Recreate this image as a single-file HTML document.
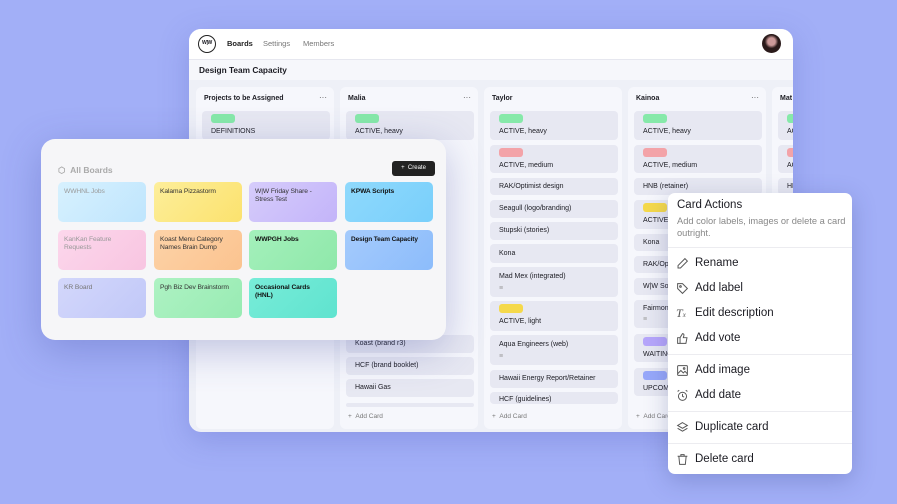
<!DOCTYPE html>
<html><head><meta charset="utf-8"><style>
*{box-sizing:border-box;margin:0;padding:0}
body{width:897px;height:504px;overflow:hidden;background:#a2aff7;font-family:"Liberation Sans",sans-serif;position:relative;color:#1b1b22}
.win{position:absolute;left:189px;top:29px;width:604px;height:403px;background:#eef0f7;border-radius:12px;overflow:hidden;box-shadow:0 8px 30px rgba(70,80,180,.25)}
.hdr{height:31px;background:#fff;border-bottom:1px solid #e6e7ef;position:relative}
.logo{position:absolute;left:9px;top:6px;width:18px;height:18px;border:1.5px solid #222;border-radius:50%;font-size:5px;font-weight:bold;text-align:center;line-height:15px;letter-spacing:-.3px}
.nav{position:absolute;top:10px;font-size:7.5px;color:#777}
.av{position:absolute;right:12px;top:5px;width:19px;height:19px;border-radius:50%;background:radial-gradient(circle at 50% 40%,#c99 0 25%,#2a1a1a 45%)}
.ttl{height:20px;background:#f6f7fb;font-size:8.3px;font-weight:bold;padding:5px 10px}
.col{position:absolute;top:58px;width:138px;height:342px;background:#f6f7fc;border-radius:6px}
.ch{position:absolute;left:8px;top:8px;font-size:7px;font-weight:bold}
.dots{position:absolute;right:7px;top:6px;font-size:8px;color:#555}
.cd{position:absolute;left:6px;width:128px;background:#e7e8f2;border-radius:4px;font-size:7px;padding:0 9px}
.lb{display:block;width:24px;height:9px;border-radius:3px;margin:3px 0 5px}
.add{position:absolute;left:8px;top:326px;font-size:6.5px;color:#777}
.g{background:#86e9a9}.r{background:#f3a3a8}.y{background:#f5d94b}.p{background:#b6a6fb}.b{background:#97a8fa}
.ov{position:absolute;left:41px;top:139px;width:405px;height:201px;background:#f6f6f8;border-radius:14px;box-shadow:0 10px 40px rgba(60,70,160,.3)}
.tile{position:absolute;width:88px;height:40px;border-radius:5px;font-size:6.7px;padding:6px 6px;line-height:7.5px;color:#333;letter-spacing:-.1px}
.menu{position:absolute;left:668px;top:193px;width:184px;height:281px;background:#fff;border-radius:7px;box-shadow:0 6px 24px rgba(40,50,120,.25)}
.mi{position:absolute;left:27px;font-size:11.5px;color:#1b1b22}
.ic{position:absolute;left:8px;width:13px;height:13px}
.dv{position:absolute;left:0;width:184px;height:1px;background:#ececf0}
</style></head><body>
<div class="win">
 <div class="hdr"><div class="logo">W|W</div>
 <div class="nav" style="left:38px;color:#222;font-weight:bold">Boards</div>
 <div class="nav" style="left:74px">Settings</div>
 <div class="nav" style="left:114px">Members</div>
 <div class="av"></div></div>
 <div class="ttl">Design Team Capacity</div>
 <div class="col" style="left:7px"><div class="ch">Projects to be Assigned</div><div class="dots">···</div>
  <div class="cd" style="top:24px;height:29px"><span class="lb g"></span>DEFINITIONS</div></div>
 <div class="col" style="left:151px"><div class="ch">Malia</div><div class="dots">···</div>
  <div class="cd" style="top:24px;height:29px"><span class="lb g"></span>ACTIVE, heavy</div>
  <div class="cd" style="top:248px;height:18px;line-height:18px">Koast (brand r3)</div>
  <div class="cd" style="top:270px;height:18px;line-height:18px">HCF (brand booklet)</div>
  <div class="cd" style="top:292px;height:18px;line-height:18px">Hawaii Gas</div>
  <div class="cd" style="top:316px;height:4px"></div>
  <div class="add">+ &nbsp;Add Card</div></div>
 <div class="col" style="left:295px"><div class="ch">Taylor</div>
  <div class="cd" style="top:24px;height:29px"><span class="lb g"></span>ACTIVE, heavy</div>
  <div class="cd" style="top:58px;height:28px"><span class="lb r"></span>ACTIVE, medium</div>
  <div class="cd" style="top:91px;height:17px;line-height:17px">RAK/Optimist design</div>
  <div class="cd" style="top:113px;height:18px;line-height:18px">Seagull (logo/branding)</div>
  <div class="cd" style="top:135px;height:18px;line-height:18px">Stupski (stories)</div>
  <div class="cd" style="top:157px;height:19px;line-height:19px">Kona</div>
  <div class="cd" style="top:180px;height:30px;padding-top:6px">Mad Mex (integrated)<div style="margin-top:5px;color:#999">≡</div></div>
  <div class="cd" style="top:214px;height:30px"><span class="lb y"></span>ACTIVE, light</div>
  <div class="cd" style="top:248px;height:30px;padding-top:6px">Aqua Engineers (web)<div style="margin-top:5px;color:#999">≡</div></div>
  <div class="cd" style="top:283px;height:18px;line-height:18px">Hawaii Energy Report/Retainer</div>
  <div class="cd" style="top:305px;height:12px;padding-top:4px">HCF (guidelines)</div>
  <div class="add">+ &nbsp;Add Card</div></div>
 <div class="col" style="left:439px"><div class="ch">Kainoa</div><div class="dots">···</div>
  <div class="cd" style="top:24px;height:29px"><span class="lb g"></span>ACTIVE, heavy</div>
  <div class="cd" style="top:58px;height:28px"><span class="lb r"></span>ACTIVE, medium</div>
  <div class="cd" style="top:91px;height:17px;line-height:17px">HNB (retainer)</div>
  <div class="cd" style="top:113px;height:29px"><span class="lb y"></span>ACTIVE, light</div>
  <div class="cd" style="top:147px;height:17px;line-height:17px">Kona</div>
  <div class="cd" style="top:169px;height:17px;line-height:17px">RAK/Optimist</div>
  <div class="cd" style="top:191px;height:17px;line-height:17px">W|W Social</div>
  <div class="cd" style="top:213px;height:28px;padding-top:5px">Fairmont<div style="margin-top:4px;color:#999">≡</div></div>
  <div class="cd" style="top:247px;height:28px"><span class="lb p"></span>WAITING</div>
  <div class="cd" style="top:281px;height:28px"><span class="lb b"></span>UPCOMING</div>
  <div class="add">+ &nbsp;Add Card</div></div>
 <div class="col" style="left:583px"><div class="ch">Mat</div>
  <div class="cd" style="top:24px;height:29px"><span class="lb g"></span>ACTIVE</div>
  <div class="cd" style="top:58px;height:28px"><span class="lb r"></span>ACTIVE</div>
  <div class="cd" style="top:91px;height:17px;line-height:17px">HNB</div></div>
</div>

<div class="ov">
 <div style="position:absolute;left:17px;top:26px;font-size:8.5px;font-weight:bold;color:#aaa">⬡ &nbsp;All Boards</div>
 <div style="position:absolute;left:351px;top:22px;width:43px;height:15px;background:#222;border-radius:3px;color:#fff;font-size:6px;text-align:center;line-height:15px">+ &nbsp;Create</div>
 <div class="tile" style="left:17px;top:43px;background:linear-gradient(135deg,#d7f1fe,#bfe5fd);color:#999">WWHNL Jobs</div>
 <div class="tile" style="left:113px;top:43px;background:linear-gradient(135deg,#fdee9a,#fbe26e)">Kalama Pizzastorm</div>
 <div class="tile" style="left:208px;top:43px;background:linear-gradient(135deg,#d6ccfb,#c3b4f9)">W|W Friday Share - Stress Test</div>
 <div class="tile" style="left:304px;top:43px;background:linear-gradient(135deg,#8fd9fc,#79cffb);color:#111;font-weight:bold">KPWA Scripts</div>
 <div class="tile" style="left:17px;top:91px;background:linear-gradient(135deg,#fcd7ec,#f8c5e1);color:#999">KanKan Feature Requests</div>
 <div class="tile" style="left:113px;top:91px;background:linear-gradient(135deg,#fdd3a8,#fbc38f)">Koast Menu Category Names Brain Dump</div>
 <div class="tile" style="left:208px;top:91px;background:linear-gradient(135deg,#a4f0bb,#8fe8aa);color:#111;font-weight:bold">WWPGH Jobs</div>
 <div class="tile" style="left:304px;top:91px;background:linear-gradient(135deg,#a5cbfc,#8cbcfb);color:#111;font-weight:bold;white-space:nowrap;font-size:6.5px">Design Team Capacity</div>
 <div class="tile" style="left:17px;top:139px;background:linear-gradient(135deg,#d3d7fb,#c1c8f8);color:#777">KR Board</div>
 <div class="tile" style="left:113px;top:139px;background:linear-gradient(135deg,#aef2c3,#98ebb3);white-space:nowrap">Pgh Biz Dev Brainstorm</div>
 <div class="tile" style="left:208px;top:139px;background:linear-gradient(135deg,#78ecd8,#5fe3cf);color:#111;font-weight:bold">Occasional Cards<br>(HNL)</div>
</div>

<div class="menu">
 <div style="position:absolute;left:9px;top:6px;font-size:11.5px">Card Actions</div>
 <div style="position:absolute;left:9px;top:22px;width:170px;font-size:9.3px;color:#888;line-height:12px">Add color labels, images or delete a card outright.</div>
 <div class="dv" style="top:54px"></div>
 <svg class="ic" style="top:64px" viewBox="0 0 16 16" fill="none" stroke="#555" stroke-width="1.2"><path d="M11 2l3 3-8.5 8.5H2.5v-3z"/></svg><div class="mi" style="top:64px">Rename</div>
 <svg class="ic" style="top:89px" viewBox="0 0 16 16" fill="none" stroke="#555" stroke-width="1.2"><path d="M2 2h6l6 6-6 6-6-6z"/><circle cx="5.5" cy="5.5" r="1"/></svg><div class="mi" style="top:89px">Add label</div>
 <div class="ic" style="top:113px;font-family:'Liberation Serif',serif;font-style:italic;font-size:12px;color:#555">T<span style="font-size:7px">x</span></div><div class="mi" style="top:114px">Edit description</div>
 <svg class="ic" style="top:139px" viewBox="0 0 16 16" fill="none" stroke="#555" stroke-width="1.2"><path d="M2 7h3v7H2zM5 7l3-5c1.5 0 2 1 1.7 2.5L9 7h4.5l-1.3 7H5"/></svg><div class="mi" style="top:139px">Add vote</div>
 <div class="dv" style="top:161px"></div>
 <svg class="ic" style="top:171px" viewBox="0 0 16 16" fill="none" stroke="#555" stroke-width="1.2"><rect x="2" y="2" width="12" height="12" rx="1"/><path d="M2 12l4-4 3 3 2-2 3 3"/><circle cx="10" cy="5.5" r="1"/></svg><div class="mi" style="top:171px">Add image</div>
 <svg class="ic" style="top:196px" viewBox="0 0 16 16" fill="none" stroke="#555" stroke-width="1.2"><circle cx="8" cy="9" r="5"/><path d="M8 6v3l2 1M2 3l2-1.5M14 3l-2-1.5"/></svg><div class="mi" style="top:196px">Add date</div>
 <div class="dv" style="top:218px"></div>
 <svg class="ic" style="top:228px" viewBox="0 0 16 16" fill="none" stroke="#555" stroke-width="1.2"><path d="M8 2l6 3.5-6 3.5-6-3.5zM2 9l6 3.5 6-3.5"/></svg><div class="mi" style="top:228px">Duplicate card</div>
 <div class="dv" style="top:250px"></div>
 <svg class="ic" style="top:260px" viewBox="0 0 16 16" fill="none" stroke="#555" stroke-width="1.2"><path d="M2 4h12M6 4V2h4v2M3.5 4l1 10h7l1-10"/></svg><div class="mi" style="top:260px">Delete card</div>
</div>
</body></html>
